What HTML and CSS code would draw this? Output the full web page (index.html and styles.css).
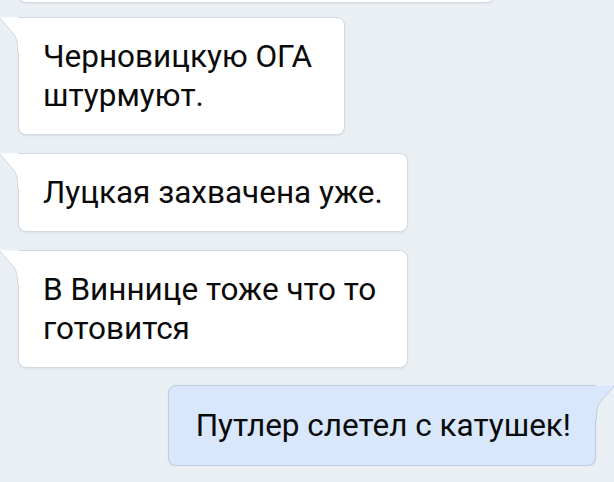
FILE: index.html
```html
<!DOCTYPE html>
<html>

<head>
    <title>Chat</title>

    <link rel="stylesheet" href="styles.css">
</head>

<body>
    <div class="chat">
        <div class="msg msg-in msg-prev"></div>

        <div class="msg msg-in msg-narrow">
            <svg class="tail tail-in" width="20" height="34" viewBox="0 0 20 34">
                <path d="M20 0.5 H0.5 L13.5 15.5 Q18.5 21 18.5 30 V34 H20 Z" fill="#fff"></path>
                <path d="M0.5 0.5 L13.5 15.5 Q18.5 21 18.5 30 V34" fill="none" stroke="#d2d9e0"></path>
            </svg>
            Черновицкую ОГА штурмуют.
        </div>

        <div class="msg msg-in">
            <svg class="tail tail-in" width="20" height="34" viewBox="0 0 20 34">
                <path d="M20 0.5 H0.5 L13.5 15.5 Q18.5 21 18.5 30 V34 H20 Z" fill="#fff"></path>
                <path d="M0.5 0.5 L13.5 15.5 Q18.5 21 18.5 30 V34" fill="none" stroke="#d2d9e0"></path>
            </svg>
            Луцкая захвачена уже.
        </div>

        <div class="msg msg-in">
            <svg class="tail tail-in" width="20" height="34" viewBox="0 0 20 34">
                <path d="M20 0.5 H0.5 L13.5 15.5 Q18.5 21 18.5 30 V34 H20 Z" fill="#fff"></path>
                <path d="M0.5 0.5 L13.5 15.5 Q18.5 21 18.5 30 V34" fill="none" stroke="#d2d9e0"></path>
            </svg>
            В Виннице тоже что то готовится
        </div>

        <div class="msg msg-out">
            <svg class="tail tail-out" width="20" height="34" viewBox="0 0 20 34">
                <path d="M0 0.5 H19.5 L6.5 15.5 Q1.5 21 1.5 30 V34 H0 Z" fill="#d8e7fb"></path>
                <path d="M19.5 0.5 L6.5 15.5 Q1.5 21 1.5 30 V34" fill="none" stroke="#bccde0"></path>
            </svg>
            Путлер слетел с катушек!
        </div>
    </div>
</body>

</html>
```

FILE: styles.css
```css
/* Page */
body {
    margin: 0;
    background-color: #eaeff4;
    font-family: Roboto, "Noto Sans", sans-serif;
    overflow: hidden;
}

.chat {
    display: flex;
    flex-direction: column;
    align-items: flex-start;
    gap: 18px;
    padding: 0 18px;
}

/* Message bubbles */
.msg {
    position: relative;
    box-sizing: border-box;
    width: fit-content;
    max-width: 390px;
    padding: 19px 24px;
    font-size: 31.5px;
    line-height: 39px;
    color: #0a0a0a;
    border: 1px solid #d2d9e0;
    border-radius: 8px;
    box-shadow: 0px 1px 2px 0px rgba(31, 45, 58, 0.08);
}

.msg-in {
    background-color: #fff;
    border-top-left-radius: 0;
}

.msg-prev {
    width: 477px;
    max-width: none;
    height: 60px;
    margin-top: -57px;
    margin-bottom: -4px;
    border-top-left-radius: 8px;
}

.msg-narrow {
    max-width: 327px;
}

.msg-out {
    align-self: flex-end;
    max-width: none;
    white-space: nowrap;
    margin-top: -1px;
    background-color: #d8e7fb;
    border-color: #bccde0;
    border-top-right-radius: 0;
    padding: 20px 24px 20px 27px;
}

/* Tails */
.tail {
    position: absolute;
    top: -1px;
}

.tail-in {
    left: -20px;
}

.tail-out {
    right: -20px;
}
```
